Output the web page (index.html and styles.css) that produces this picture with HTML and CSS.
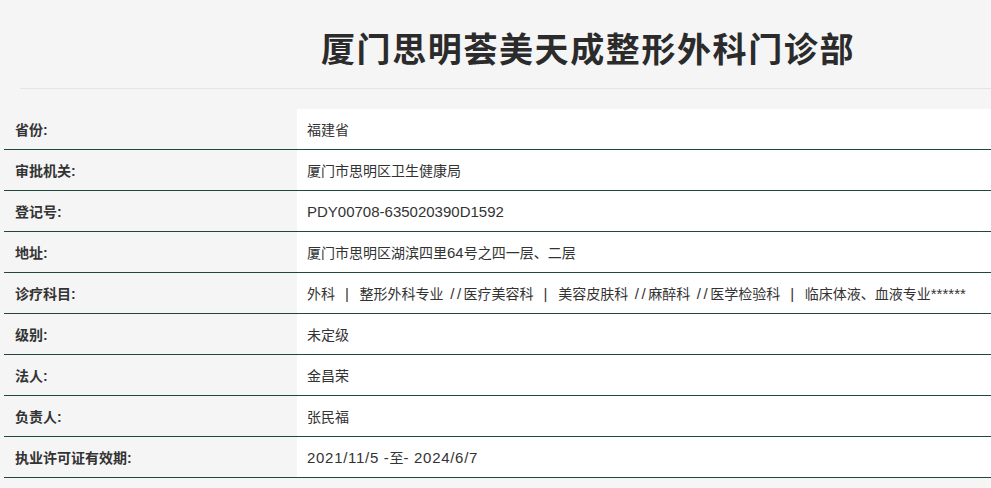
FILE: index.html
```html
<!DOCTYPE html>
<html lang="zh">
<head>
<meta charset="utf-8">
<link rel="stylesheet" href="styles.css">
</head>
<body>
<div class="header">
  <h1 class="title">厦门思明荟美天成整形外科门诊部</h1>
</div>
<div class="table">
  <div class="row"><div class="label">省份:</div><div class="value">福建省</div></div>
  <div class="row"><div class="label">审批机关:</div><div class="value">厦门市思明区卫生健康局</div></div>
  <div class="row"><div class="label">登记号:</div><div class="value"><span class="lat">PDY00708-635020390D1592</span></div></div>
  <div class="row"><div class="label">地址:</div><div class="value">厦门市思明区湖滨四里<span class="lat">64</span>号之四一层、二层</div></div>
  <div class="row"><div class="label">诊疗科目:</div><div class="value">外科<span class="lat sep">  |  </span>整形外科专业<span class="lat sl"> //</span>医疗美容科<span class="lat sep">  |  </span>美容皮肤科<span class="lat sl"> //</span>麻醉科<span class="lat sl"> //</span>医学检验科<span class="lat sep">  |  </span>临床体液、血液专业<span class="lat">******</span></div></div>
  <div class="row"><div class="label">级别:</div><div class="value">未定级</div></div>
  <div class="row"><div class="label">法人:</div><div class="value">金昌荣</div></div>
  <div class="row"><div class="label">负责人:</div><div class="value">张民福</div></div>
  <div class="row"><div class="label">执业许可证有效期:</div><div class="value"><span class="lat wide">2021/11/5 -</span>至<span class="lat wide">- 2024/6/7</span></div></div>
</div>
</body>
</html>
```
FILE: styles.css
```css
html, body {
  margin: 0;
  padding: 0;
}
body {
  background: #f5f5f5;
  font-family: "Liberation Sans", "Noto Sans CJK SC", sans-serif;
  color: #333;
  height: 488px;
  overflow: hidden;
}
.header {
  margin-left: 20px;
  height: 89px;
  border-bottom: 1px solid #e4e4e4;
  display: flex;
  align-items: center;
  justify-content: center;
  padding-left: 165px;
  box-sizing: border-box;
}
.title {
  margin: 0;
  margin-top: 8px;
  font-family: "Noto Sans CJK SC", sans-serif;
  font-size: 34px;
  font-weight: 700;
  color: #2b2b2b;
  letter-spacing: 1.6px;
  line-height: 1;
}
.table {
  margin-top: 20px;
  margin-left: 4px;
}
.row {
  display: flex;
  height: 40px;
  border-bottom: 1px solid #1f4a3b;
}
.label {
  width: 293px;
  flex: none;
  box-sizing: border-box;
  padding-left: 11px;
  display: flex;
  align-items: center;
  font-size: 14px;
  font-weight: 700;
  color: #333;
}
.value {
  flex: 1;
  background: #fff;
  padding-left: 10px;
  display: flex;
  align-items: center;
  font-size: 14px;
  color: #333;
  white-space: pre;
}
.lat {
  font-size: 15px;
}
.sep {
  letter-spacing: 0.8px;
}
.sl {
  letter-spacing: 2.5px;
}
.wide {
  letter-spacing: 0.7px;
}
```
